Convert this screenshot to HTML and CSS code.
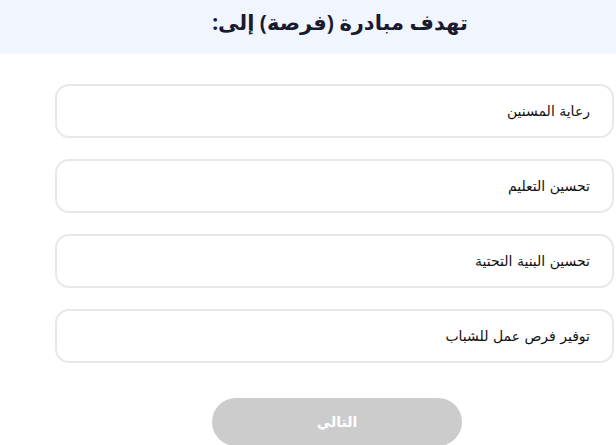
FILE: index.html
```html
<!DOCTYPE html>
<html lang="ar" dir="rtl">
<head>
<meta charset="utf-8">
<link rel="stylesheet" href="styles.css">
</head>
<body>
<header class="header">
  <h1 class="title">تهدف مبادرة (فرصة) إلى:</h1>
</header>
<main class="options">
  <div class="option">رعاية المسنين</div>
  <div class="option">تحسين التعليم</div>
  <div class="option">تحسين البنية التحتية</div>
  <div class="option">توفير فرص عمل للشباب</div>
</main>
<div class="actions">
  <button class="next" type="button">التالي</button>
</div>
</body>
</html>
```
FILE: styles.css
```css
html, body {
  margin: 0;
  padding: 0;
  background: #ffffff;
  overflow: hidden;
}
body {
  width: 616px;
  height: 445px;
  font-family: "DejaVu Sans", sans-serif;
}
.header {
  background: #f1f5fd;
  height: 44px;
  display: flex;
  align-items: center;
  justify-content: center;
  padding-left: 64px;
  padding-bottom: 10px;
}
.title {
  margin: 0;
  font-family: "Noto Sans", "DejaVu Sans", sans-serif;
  font-weight: 700;
  font-size: 21px;
  color: #1a1a2e;
}
.options {
  display: flex;
  flex-direction: column;
  gap: 21px;
  padding: 30px 2px 0 55px;
}
.option {
  height: 50px;
  border: 2px solid #e8e8ec;
  border-radius: 14px;
  display: flex;
  align-items: center;
  padding-right: 22px;
  font-family: "DejaVu Sans", sans-serif;
  font-size: 14px;
  color: #111;
}
.actions {
  display: flex;
  justify-content: center;
  padding: 35px 0 0 58px;
}
.next {
  width: 250px;
  height: 48px;
  border: none;
  border-radius: 24px;
  background: #cccccc;
  color: #ffffff;
  font-family: "DejaVu Sans", sans-serif;
  font-weight: 700;
  font-size: 14px;
}
```
